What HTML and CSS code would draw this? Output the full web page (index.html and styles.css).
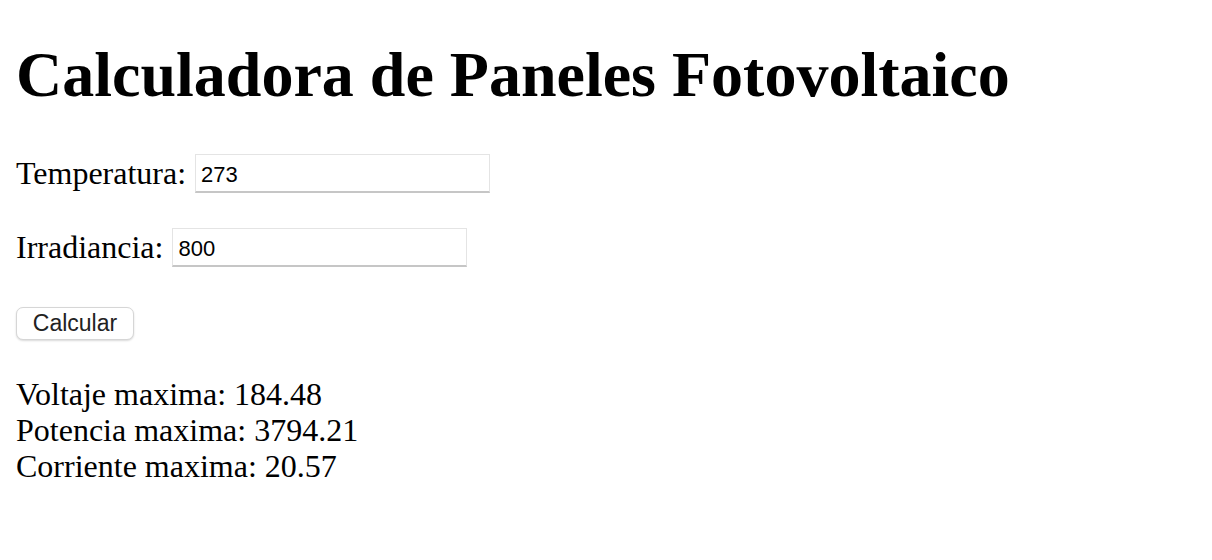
FILE: index.html
```html
<!DOCTYPE html>
<html lang="es">
<head>
<meta charset="utf-8">
<title>Calculadora de Paneles Fotovoltaico</title>
<link rel="stylesheet" href="styles.css">
</head>
<body>
<h1 class="title">Calculadora de Paneles Fotovoltaico</h1>
<form class="form">
  <div class="row">
    <label class="label" for="temp">Temperatura:</label>
    <input class="field" id="temp" type="text" value="273">
  </div>
  <div class="row">
    <label class="label" for="irr">Irradiancia:</label>
    <input class="field" id="irr" type="text" value="800">
  </div>
  <div class="row">
    <button class="btn" type="button">Calcular</button>
  </div>
</form>
<div class="results">
  <div class="line">Voltaje maxima: 184.48</div>
  <div class="line">Potencia maxima: 3794.21</div>
  <div class="line">Corriente maxima: 20.57</div>
</div>
</body>
</html>
```
FILE: styles.css
```css
html, body {
  background: #ffffff;
}
body {
  margin: 0;
  padding: 38px 16px 0 16px;
  font-family: "Liberation Serif", "Times New Roman", serif;
  font-size: 32px;
  color: #000;
}
.title {
  margin: 0;
  font-size: 64px;
  font-weight: bold;
  line-height: normal;
}
.form {
  margin-top: 42px;
  display: flex;
  flex-direction: column;
}
.row {
  display: flex;
  align-items: center;
  gap: 9px;
}
.row + .row {
  margin-top: 35px;
}
.row:last-child {
  margin-top: 40px;
}
.label {
  line-height: normal;
}
.field {
  box-sizing: border-box;
  width: 295px;
  height: 39px;
  margin: 0;
  padding: 4px 5px 0 5px;
  border: 1px solid #e4e4e4;
  border-bottom: 2px solid #c6c6c6;
  background: #fff;
  font-family: "Liberation Sans", Arial, sans-serif;
  font-size: 22px;
  color: #000;
  outline: none;
}
.btn {
  box-sizing: border-box;
  width: 118px;
  height: 33px;
  margin: 0;
  padding: 0;
  border: 1px solid #d6d6d6;
  border-radius: 7px;
  background: #fff;
  box-shadow: 0 1px 2px rgba(0, 0, 0, 0.15);
  font-family: "Liberation Sans", Arial, sans-serif;
  font-size: 23px;
  color: #222;
}
.results {
  margin-top: 36px;
}
.line {
  line-height: 36px;
}
```
